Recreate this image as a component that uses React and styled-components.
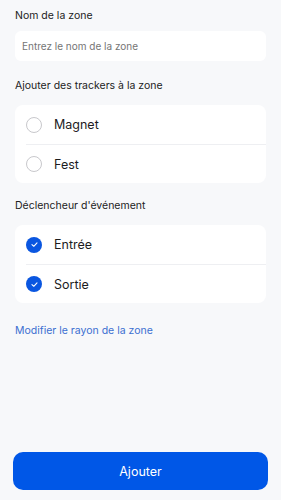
import React, { useState } from "react";
import styled, { createGlobalStyle } from "styled-components";

const GlobalStyle = createGlobalStyle`
  html, body {
    margin: 0;
    padding: 0;
    background: #f7f8fa;
  }
  body {
    font-family: "Inter", "Liberation Sans", sans-serif;
    -webkit-font-smoothing: antialiased;
  }
`

const Page = styled.div`
  width: 281px;
  height: 500px;
  box-sizing: border-box;
  display: flex;
  flex-direction: column;
  padding: 9px 15px 10px;
  background: #f7f8fa;
`

const Label = styled.div`
  font-size: 10.5px;
  color: #222;
  line-height: 14px;
  margin-bottom: 8px;
`

const Input = styled.input`
  height: 30px;
  box-sizing: border-box;
  border: none;
  border-radius: 6px;
  background: #fff;
  padding: 0 7px;
  font-family: inherit;
  font-size: 10px;
  color: #222;
  outline: none;
  margin-bottom: 18px;
  ::placeholder {
    color: #8e8e93;
  }
`

const Card = styled.div`
  background: #fff;
  border-radius: 8px;
  padding: 0 0 0 11px;
  margin-top: 4px;
  margin-bottom: 16px;
`

const Row = styled.div`
  display: flex;
  align-items: center;
  box-sizing: border-box;
  height: 39px;
  gap: 12px;
  border-top: ${(p) => (p.first ? "none" : "1px solid #eeeff2")};
  cursor: pointer;
`

const Radio = styled.div`
  width: 16px;
  height: 16px;
  box-sizing: border-box;
  border-radius: 50%;
  border: ${(p) => (p.checked ? "none" : "1.3px solid #c8c8cc")};
  background: ${(p) => (p.checked ? "#0a56e0" : "transparent")};
  display: flex;
  align-items: center;
  justify-content: center;
`

const RowText = styled.span`
  font-size: 12.5px;
  color: #1c1c1e;
`

const Link = styled.div`
  font-size: 10.5px;
  color: #3b6fd1;
  margin-top: 5px;
`

const Spacer = styled.div`
  flex: 1;
`

const Button = styled.button`
  margin: 0 -2px;
  height: 38px;
  border: none;
  border-radius: 10px;
  background: #0057e7;
  color: #fff;
  font-family: inherit;
  font-size: 12.5px;
  cursor: pointer;
`

const Check = () => (
  <svg width="9" height="9" viewBox="0 0 10 10">
    <path d="M2.2 5.2 L4.2 7 L7.8 3.2" fill="none" stroke="#fff" strokeWidth="1.2" strokeLinecap="round" strokeLinejoin="round" />
  </svg>
)

const Option = ({ label, checked, first, onClick }) => (
  <Row first={first} onClick={onClick}>
    <Radio checked={checked}>{checked && <Check />}</Radio>
    <RowText>{label}</RowText>
  </Row>
)

export default function App() {
  const [trackers, setTrackers] = useState({ Magnet: false, Fest: false })
  const [events, setEvents] = useState({ "Entrée": true, Sortie: true })

  return (
    <Page>
      <GlobalStyle />
      <Label>Nom de la zone</Label>
      <Input placeholder="Entrez le nom de la zone" />

      <Label>Ajouter des trackers à la zone</Label>
      <Card>
        {Object.keys(trackers).map((k, i) => (
          <Option key={k} label={k} first={i === 0} checked={trackers[k]}
            onClick={() => setTrackers({ ...trackers, [k]: !trackers[k] })} />
        ))}
      </Card>

      <Label>Déclencheur d'événement</Label>
      <Card>
        {Object.keys(events).map((k, i) => (
          <Option key={k} label={k} first={i === 0} checked={events[k]}
            onClick={() => setEvents({ ...events, [k]: !events[k] })} />
        ))}
      </Card>

      <Link>Modifier le rayon de la zone</Link>
      <Spacer />
      <Button>Ajouter</Button>
    </Page>
  )
}
